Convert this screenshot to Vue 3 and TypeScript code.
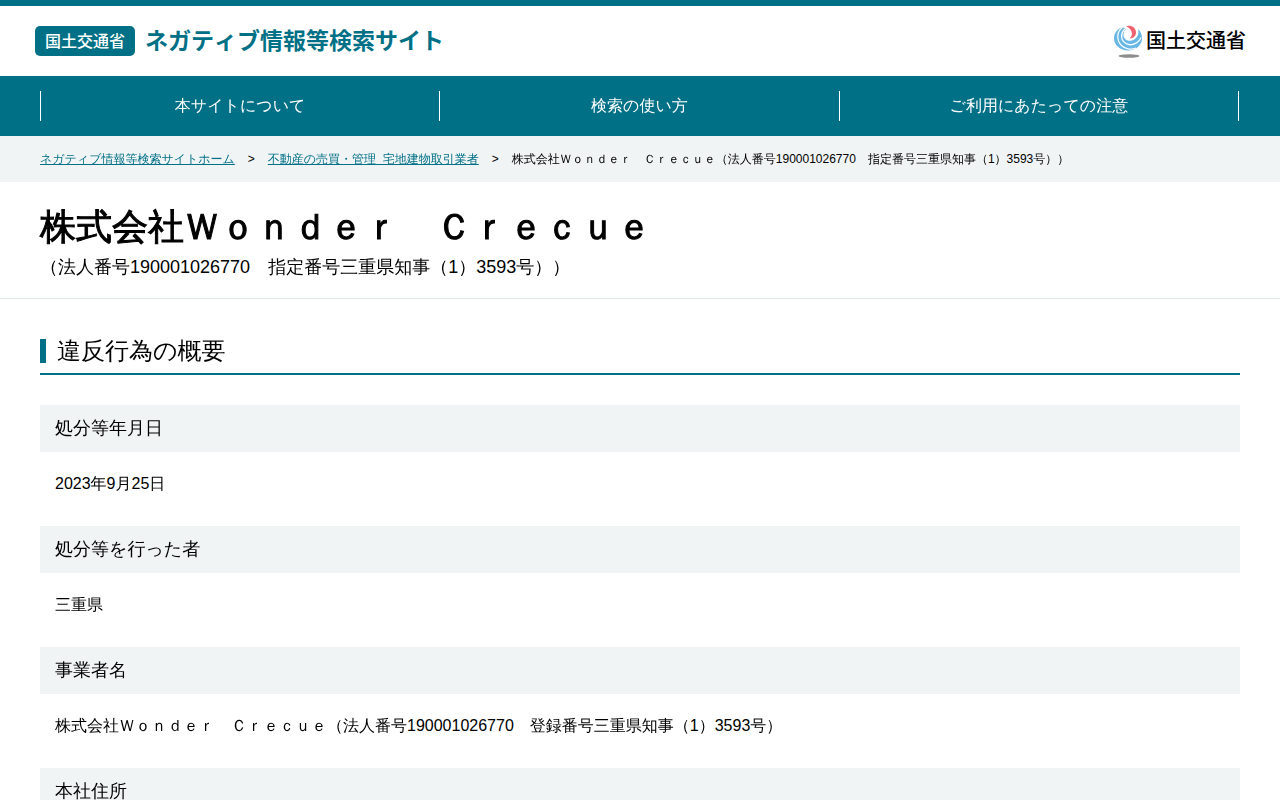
<script setup lang="ts">
interface NavItem {
  label: string
  href: string
}

interface Detail {
  term: string
  value?: string
}

const navItems: NavItem[] = [
  { label: '本サイトについて', href: '#about' },
  { label: '検索の使い方', href: '#howto' },
  { label: 'ご利用にあたっての注意', href: '#notice' },
]

const crumbs: NavItem[] = [
  { label: 'ネガティブ情報等検索サイトホーム', href: '#home' },
  { label: '不動産の売買・管理\u00a0\u00a0宅地建物取引業者', href: '#category' },
]

const company = '株式会社Ｗｏｎｄｅｒ　Ｃｒｅｃｕｅ'
const companyNumber = '（法人番号190001026770　指定番号三重県知事（1）3593号））'

const details: Detail[] = [
  { term: '処分等年月日', value: '2023年9月25日' },
  { term: '処分等を行った者', value: '三重県' },
  {
    term: '事業者名',
    value: '株式会社Ｗｏｎｄｅｒ　Ｃｒｅｃｕｅ（法人番号190001026770　登録番号三重県知事（1）3593号）',
  },
  { term: '本社住所' },
]
</script>

<template>
  <div class="page" lang="ja">
    <header class="header">
      <a class="site" href="#home">
        <span class="badge">国土交通省</span>
        <span class="site-name">ネガティブ情報等検索サイト</span>
      </a>
      <a class="ministry" href="#mlit">
        <svg class="emblem" viewBox="0 0 30 34" aria-hidden="true">
          <path d="M10 2C4 3.500 1 8.500 1 13.500C1 20 7.500 25.500 15 25.500C22.500 25.500 29 20.500 29 13.500C29 9.500 27.500 6 25 4C26.500 9 24 14 19 15.500C14 17 10 13.500 10.500 9C10.700 7 11.500 5.500 13 4Z" fill="#69b7e5" />
          <path d="M10.500 1.500C3.500 6 3 15 8.500 20.500C12 24 18 25 23 23" fill="none" stroke="#fff" stroke-width="1.200" />
          <path d="M12.500 3.500C7 8 7.500 15.500 13 18.500C18 21.500 25.500 18.500 28 12.500" fill="none" stroke="#fff" stroke-width="1.300" />
          <path d="M13 1.500C17.500-.5 23 2.500 23 7.500C23 11 20.500 13.300 16.500 13.300C19 11.500 19.500 9 18.500 6.500C17.500 4 16 2.500 13 1.500Z" fill="#f0616f" />
          <ellipse cx="16" cy="31" rx="10.500" ry="1.700" fill="#8d8d8d" />
        </svg>
        <span class="ministry-name">国土交通省</span>
      </a>
    </header>

    <nav class="nav">
      <ul class="nav-list">
        <li v-for="item in navItems" :key="item.href" class="nav-item">
          <a :href="item.href">{{ item.label }}</a>
        </li>
      </ul>
    </nav>

    <nav class="crumbs" aria-label="パンくずリスト">
      <ol class="crumb-list">
        <li v-for="crumb in crumbs" :key="crumb.href">
          <a :href="crumb.href">{{ crumb.label }}</a><span class="arrow">&gt;</span>
        </li>
        <li>{{ company }}{{ companyNumber }}</li>
      </ol>
    </nav>

    <main>
      <div class="title">
        <h1>{{ company }}</h1>
        <p>{{ companyNumber }}</p>
      </div>
      <section class="summary">
        <h2>違反行為の概要</h2>
        <dl>
          <template v-for="detail in details" :key="detail.term">
            <dt>{{ detail.term }}</dt>
            <dd v-if="detail.value">{{ detail.value }}</dd>
          </template>
        </dl>
      </section>
    </main>
  </div>
</template>

<style>
html {
  overflow-x: hidden;
  scrollbar-width: none;
}

body {
  margin: 0;
  background: #fff;
}
</style>

<style scoped>
.page {
  color: #000;
  font-family: "Liberation Sans", "WenQuanYi Zen Hei", "Noto Sans CJK JP", sans-serif;
  font-size: 16px;
  line-height: 24px;
  text-spacing-trim: space-all;
}

a {
  color: inherit;
}

ul,
ol,
dl,
dd,
p,
h1,
h2 {
  margin: 0;
  padding: 0;
}

ul,
ol {
  list-style: none;
}

.header {
  display: flex;
  align-items: center;
  justify-content: space-between;
  height: 70px;
  padding: 0 34px 0 35px;
  border-top: 6px solid #007086;
}

.site {
  display: flex;
  align-items: center;
  gap: 10px;
  color: #007086;
  font-family: "Noto Sans CJK JP", sans-serif;
  font-kerning: none;
  text-decoration: none;
}

.badge {
  height: 30px;
  padding: 0 10px;
  border-radius: 5px;
  background: #007086;
  color: #fff;
  font-weight: 500;
  line-height: 28px;
}

.site-name {
  height: 30px;
  font-size: 23px;
  font-weight: 700;
  line-height: 26px;
}

.ministry {
  display: flex;
  align-items: center;
  gap: 3px;
  font-family: "Noto Sans CJK JP", sans-serif;
  font-size: 20px;
  font-weight: 500;
  line-height: 28px;
  text-decoration: none;
}

.emblem {
  width: 30px;
  height: 34px;
  padding-top: 2px;
}

.ministry-name {
  height: 30px;
}

.nav {
  padding: 15px 41px 15px 40px;
  background: #007086;
  color: #fff;
}

.nav-list {
  display: flex;
}

.nav-item {
  flex: 1;
  border-left: 1px solid #fff;
  line-height: 30px;
  text-align: center;
}

.nav-item:last-child {
  border-right: 1px solid #fff;
}

.nav-item a {
  display: block;
  text-decoration: none;
}

.crumbs {
  padding: 14px 40px;
  background: #f0f4f5;
  font-size: 12px;
  line-height: 18px;
}

.crumb-list {
  display: flex;
  flex-wrap: wrap;
}

.crumbs a {
  color: #007086;
}

.arrow {
  padding: 0 13px;
}

.title {
  padding: 18px 40px;
  border-bottom: 1px solid #dde4e5;
}

.title h1 {
  font-size: 36px;
  line-height: 54px;
  -webkit-text-stroke: 1px currentColor;
}

.title p {
  font-size: 18px;
  line-height: 26px;
}

.summary {
  padding: 30px 40px;
}

.summary h2 {
  display: flex;
  align-items: center;
  gap: 11px;
  padding: 4px 0;
  border-bottom: 2px solid #007086;
  font-size: 24px;
  font-weight: 400;
  line-height: 36px;
}

.summary h2::before {
  width: 6px;
  height: 24px;
  background: #007086;
  content: "";
}

dl {
  padding-top: 30px;
}

dt {
  padding: 10px 15px;
  background: #f0f4f5;
  font-size: 18px;
  line-height: 27px;
}

dd {
  padding: 20px 15px 30px;
}
</style>
